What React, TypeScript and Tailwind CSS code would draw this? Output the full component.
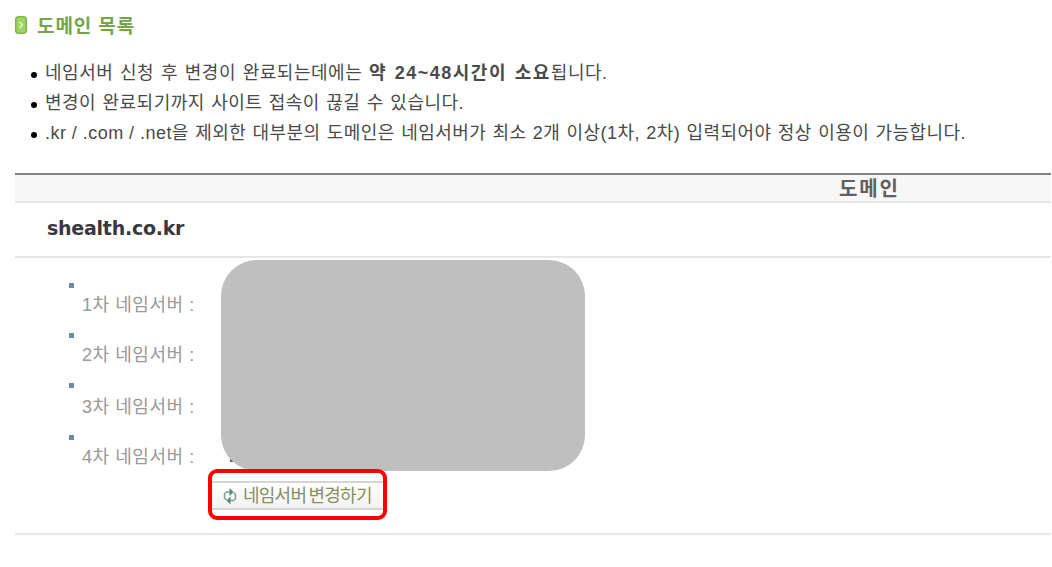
const servers = [
  { label: "1차 네임서버 :", height: "h-[50px]", offset: "mt-[9px]" },
  { label: "2차 네임서버 :", height: "h-[50px]", offset: "mt-[9px]" },
  { label: "3차 네임서버 :", height: "h-[52px]", offset: "mt-[11px]" },
  { label: "4차 네임서버 :", height: "h-[50px]", offset: "mt-[9px]" },
];

function TitleIcon() {
  return (
    <svg width="12" height="18" viewBox="0 0 12 18" fill="none">
      <rect x="0.75" y="0.75" width="10.5" height="16.5" rx="3" fill="#a0d468" stroke="#7db648" strokeWidth="1.5" />
      <path d="M4.5 6l3 3-3 3" stroke="#e6f9c8" strokeWidth="1.3" />
    </svg>
  );
}

function RefreshIcon() {
  return (
    <svg width="14" height="18" viewBox="0 0 14 18" fill="none">
      <path d="M3.500 13L1.500 11V7L3.500 5H7" stroke="#7aa38a" strokeWidth="1.5" />
      <path d="M6.500 1l4 4-4 4z" fill="#558a6c" />
      <path d="M10.500 5.500L12.500 7.500v4L10.500 13.500H7" stroke="#7aa38a" strokeWidth="1.5" />
      <path d="M7.500 9.500l-4 4 4 4z" fill="#558a6c" />
    </svg>
  );
}

function Notice({ children }: { children: React.ReactNode }) {
  return (
    <li className="flex h-[30px] items-center">
      <span className="mr-[8px] mt-[3px] size-[6px] rounded-full bg-black" />
      {children}
    </li>
  );
}

export default function App() {
  return (
    <main className="h-[567px] w-[1051px] overflow-hidden whitespace-nowrap bg-white pl-[15px] font-['Liberation_Sans','Noto_Sans_CJK_KR',sans-serif] text-[18px] text-[#4a4a4a]">
      <h1 className="flex h-[50px] items-center gap-[10px] text-[19px] font-bold text-[#76a548]">
        <TitleIcon />
        <span className="pt-[5px] tracking-[0.9px]">도메인 목록</span>
      </h1>

      <ul className="mt-[8px] h-[115px] pl-[16px]">
        <Notice>
          <span className="tracking-[0.52px] [word-spacing:1.2px]">
            네임서버 신청 후 변경이 완료되는데에는 <b className="tracking-[1.5px]">약 24~48시간이 소요</b>됩니다.
          </span>
        </Notice>
        <Notice>
          <span className="tracking-[0.47px] [word-spacing:1px]">변경이 완료되기까지 사이트 접속이 끊길 수 있습니다.</span>
        </Notice>
        <Notice>
          <span className="tracking-[0.46px] [word-spacing:0.8px]">
            <span className="[word-spacing:0px]">.kr / .com / .net</span>을 제외한 대부분의 도메인은 네임서버가 최소 2개 이상(1차, 2차) 입력되어야 정상 이용이 가능합니다.
          </span>
        </Notice>
      </ul>

      <section>
        <div className="h-[30px] border-y-2 border-t-[#808080] border-b-[#e6e6e6] bg-[#f7f7f7] pl-[824px] text-[20px] font-bold leading-[28px] tracking-[1.8px] text-[#606060]">
          도메인
        </div>
        <div className="h-[55px] border-b-2 border-[#e6e6e6] pl-[32px] font-['DejaVu_Sans',sans-serif] text-[19px] font-bold leading-[51px] tracking-[-0.25px] text-[#383840]">
          shealth.co.kr
        </div>

        <div className="relative h-[277px] border-b-2 border-[#e6e6e6] pt-[25px]">
          <ul className="pl-[54px] text-[#999]">
            {servers.map((server) => (
              <li key={server.label} className={`${server.height} flex items-start`}>
                <span className="size-[5px] bg-[#6f8ba0]" />
                <span className={`${server.offset} ml-[8px] leading-[26px] tracking-[0.55px]`}>{server.label}</span>
              </li>
            ))}
          </ul>
          <span className="absolute left-[215px] top-[201px] h-[3px] w-[5px] bg-[#555]" />
          <div className="absolute left-[206px] top-[2px] h-[211px] w-[364px] rounded-[36px] bg-[#bfbfbf]" />
          <div className="absolute left-[193px] top-[211px] h-[51px] w-[179px] rounded-[9px] border-4 border-[#f00] bg-white py-[8px]">
            <button className="flex h-[29px] w-full items-center border-y-2 border-[#d5d5d8] bg-linear-to-b from-white to-[#f3f3f3] pl-[11px] text-[#868e5e]">
              <RefreshIcon />
              <span className="ml-[6px] pt-[1px] tracking-[-0.75px] [word-spacing:-2px]">네임서버 변경하기</span>
            </button>
          </div>
        </div>
      </section>
    </main>
  );
}
